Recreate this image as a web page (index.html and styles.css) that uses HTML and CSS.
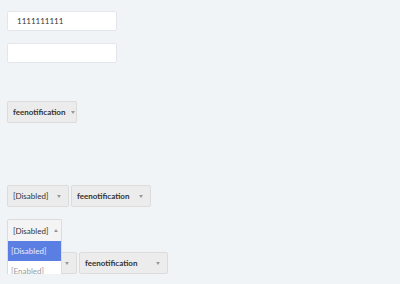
FILE: index.html
```html
<!DOCTYPE html>
<html>
<head>
    <meta charset="utf-8">
    <title>Selects</title>
    <link rel="stylesheet" href="styles.css">
</head>
<body>
    <div class="page">
        <input class="field" type="text" value="1111111111">
        <input class="field field-second" type="text">

        <div class="row row-single">
            <div class="pick pick-fee"><span>feenotification</span><i class="caret"></i></div>
        </div>

        <div class="row row-pair">
            <div class="pick pick-state"><span>[Disabled]</span><i class="caret"></i></div>
            <div class="pick pick-fee-wide"><span>feenotification</span><i class="caret"></i></div>
        </div>

        <div class="open-wrap">
            <div class="pick pick-open"><span>[Disabled]</span><i class="caret caret-up"></i></div>
            <ul class="menu">
                <li class="menu-item active">[Disabled]</li>
                <li class="menu-item">[Enabled]</li>
            </ul>
        </div>

        <div class="row row-under">
            <div class="pick pick-state-under"><span>[Disabled]</span><i class="caret"></i></div>
            <div class="pick pick-fee-under"><span>feenotification</span><i class="caret"></i></div>
        </div>
    </div>
</body>
</html>
```

FILE: styles.css
```css
body{
    margin: 0;
    padding: 0;
    background-color: #f1f4f7;
    font-family: Lato, "Open Sans", sans-serif;
    color: #333;
    overflow: hidden;}

.page{
    padding: 11px 7px 0 7px;
    display: flex;
    flex-direction: column;
    align-items: flex-start;}

.field{
    box-sizing: border-box;
    width: 110px;
    height: 20px;
    margin: 0;
    padding: 0 9px;
    border: 1px solid #e3e7eb;
    border-radius: 2px;
    background-color: #fff;
    font-family: Lato, sans-serif;
    font-size: 8px;
    color: #333;
    outline: none;}

.field-second{
    margin-top: 12px;}

.row{
    display: flex;
    gap: 2px;}

.row-single{
    margin-top: 38px;}

.row-pair{
    margin-top: 62px;}

.pick{
    box-sizing: border-box;
    height: 22px;
    padding: 0 7px 0 5px;
    display: flex;
    align-items: center;
    justify-content: space-between;
    background-color: #ececec;
    border: 1px solid #dcdcdc;
    border-radius: 2px;
    font-size: 8px;
    font-weight: bold;
    white-space: nowrap;}

.pick span{
    padding-right: 6px;}

.pick-fee{ width: 70px;}
.pick-state{ width: 62px; font-weight: normal;}
.pick-fee-wide{ width: 80px;}
.pick-state-under{ width: 70px; font-weight: normal;}
.pick-fee-under{ width: 89px;}

.caret{
    width: 0;
    height: 0;
    border-left: 2.5px solid transparent;
    border-right: 2.5px solid transparent;
    border-top: 3px solid #999;}

.caret-up{
    border-top: 0;
    border-bottom: 3px solid #999;}

.open-wrap{
    position: relative;
    margin-top: 12px;
    z-index: 5;}

.pick-open{
    width: 55px;
    font-weight: normal;
    background-color: #f4f4f4;
    border-bottom: 0;
    border-radius: 2px 2px 0 0;}

.menu{
    position: absolute;
    top: 22px;
    left: 0;
    width: 55px;
    box-sizing: border-box;
    margin: 0;
    padding: 0;
    list-style: none;
    background-color: #fff;
    border: 1px solid #dcdcdc;
    border-top: 0;}

.menu-item{
    height: 20px;
    line-height: 20px;
    padding: 0 3px;
    font-size: 8px;
    color: #999;}

.menu-item.active{
    background-color: #5b7ee2;
    color: #e8eeff;}

.row-under{
    margin-top: 11px;}
```
